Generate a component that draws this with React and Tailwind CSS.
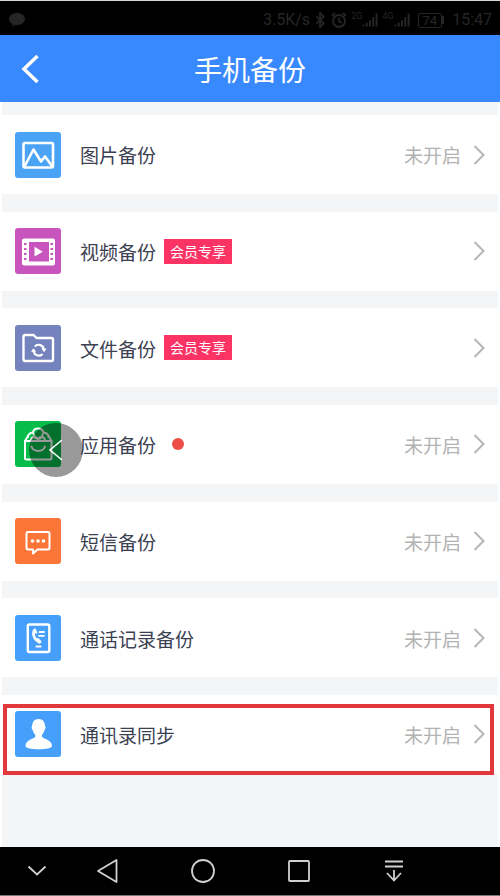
import { clsx } from "clsx";

const glyph = { fill: "none", stroke: "#fff", strokeWidth: 2.4, strokeLinejoin: "round", strokeLinecap: "round" };

function PictureIcon() {
  return (
    <svg viewBox="0 0 46 46" className="size-full" {...glyph} strokeWidth="2.6">
      <rect x="8.5" y="11" width="29.5" height="24.5" rx="1.5" />
      <path d="M10 33.5 18.5 17.5 26 29.5 30 24.5 37 34" />
    </svg>
  );
}

function VideoIcon() {
  return (
    <svg viewBox="0 0 46 46" className="size-full" fill="#fff">
      <path
        fillRule="evenodd"
        d="M9 10.5h29a2 2 0 0 1 2 2v23a2 2 0 0 1-2 2H9a2 2 0 0 1-2-2v-23a2 2 0 0 1 2-2zM14 14v19.5h20V14zM9 15v2h2.5v-2zM9 20v2h2.5v-2zM9 25v2h2.5v-2zM9 30v2h2.5v-2zM35.5 15v2H38v-2zM35.5 20v2H38v-2zM35.5 25v2H38v-2zM35.5 30v2H38v-2z"
      />
      <path d="M19.5 18.8v9.8l8.3-4.9z" />
    </svg>
  );
}

function FolderIcon() {
  return (
    <svg viewBox="0 0 46 46" className="size-full" {...glyph}>
      <path d="M8.5 34.5v-23A1.5 1.5 0 0 1 10 10h8.5l3 3h15a1.5 1.5 0 0 1 1.5 1.5v20a1.5 1.5 0 0 1-1.5 1.5H10a1.5 1.5 0 0 1-1.5-1.5z" />
      <path d="M20.5 20.8a5.3 5.3 0 0 1 8.3 3.2M27 29.6a5.3 5.3 0 0 1-8.3-3.2" strokeWidth="2.2" />
      <path d="M26.3 23.6h5.2l-2.4 3.6zM21.2 26.8H16l2.4-3.6z" fill="#fff" stroke="none" />
    </svg>
  );
}

function AppsIcon() {
  return (
    <svg viewBox="0 0 46 46" className="size-full" {...glyph} strokeWidth="2">
      <path d="M10 20h26.5v17a1.5 1.5 0 0 1-1.5 1.5H11.500A1.5 1.5 0 0 1 10 37z" />
      <path d="M10 20l3-5M36.5 20l-3-5" />
      <path d="M13 16a4 4 0 0 1 5-4c0-6 9.500-6 10.500 0a4 4 0 0 1 5 4" />
      <path d="M16 19.500a3.500 3.500 0 0 1 7 0a3.500 3.500 0 0 1 7 0M19 13.500a4 4 0 0 0 8.500 0" />
      <path d="M16.500 25.500a7 6 0 0 0 13.500 0" />
    </svg>
  );
}

function MessageIcon() {
  return (
    <svg viewBox="0 0 46 46" className="size-full" {...glyph} strokeWidth="2">
      <path d="M13 14h20a1.5 1.5 0 0 1 1.5 1.5V30a1.5 1.5 0 0 1-1.5 1.5H22.5L18 35.5v-4h-5a1.5 1.5 0 0 1-1.5-1.5V15.5A1.5 1.5 0 0 1 13 14z" />
      <g fill="#fff" stroke="none">
        <circle cx="17.500" cy="23" r="1.8" />
        <circle cx="23" cy="23" r="1.8" />
        <circle cx="28.500" cy="23" r="1.8" />
      </g>
    </svg>
  );
}

function CallIcon() {
  return (
    <svg viewBox="0 0 46 46" className="size-full" {...glyph} strokeWidth="2.4">
      <rect x="12.800" y="9.500" width="21.500" height="27.500" rx="1.5" />
      <path d="M19.5 15c-2.5 4-.5 9.500 5 12.300" strokeWidth="2.6" />
      <path d="M20 14.500l1.300 3.300M22.800 24l2.700 2.800" strokeWidth="2" />
      <path d="M24.500 17h4.500M24 20.800h5" strokeWidth="1.8" />
      <path d="M21.500 31.500h4" strokeWidth="2.2" />
    </svg>
  );
}

function ContactIcon() {
  return (
    <svg viewBox="0 0 46 46" className="size-full" fill="#fff">
      <path d="M23.500 8c4.200 0 6.500 2.800 6.500 7 1 .3.800 3.300-.5 4-.4 2-1.300 3.600-2.500 4.700v2c0 1.600 10 2.800 10 9.300 0 2-6 3.300-13.300 3.300S10.500 37 10.500 35c0-6.500 9.800-7.700 9.800-9.300v-2c-1.200-1.100-2.200-2.700-2.600-4.700-1.300-.7-1.500-3.700-.5-4 0-4.200 2.300-7 6.300-7z" />
    </svg>
  );
}

const items = [
  { label: "图片备份", icon: PictureIcon, color: "bg-[#4ba3f5]", status: "未开启" },
  { label: "视频备份", icon: VideoIcon, color: "bg-[#c855bd]", vip: true },
  { label: "文件备份", icon: FolderIcon, color: "bg-[#7482bd]", vip: true },
  { label: "应用备份", icon: AppsIcon, color: "bg-[#06bd4b]", status: "未开启", dot: true, floatingBall: true },
  { label: "短信备份", icon: MessageIcon, color: "bg-[#fa7638]", status: "未开启" },
  { label: "通话记录备份", icon: CallIcon, color: "bg-[#479ffc]", status: "未开启" },
  { label: "通讯录同步", icon: ContactIcon, color: "bg-[#479ffc]", status: "未开启", marked: true },
];

function Signal({ label }) {
  return (
    <span className="flex items-start">
      <span className="text-[9px] leading-none">{label}</span>
      <svg width="16" height="16" viewBox="0 0 17 16" fill="none" stroke="currentColor" strokeWidth="2">
        <path d="M1.5 13v2M5 11v4M8.500 8v7M12 5v10M15.500 1v14" />
      </svg>
    </span>
  );
}

function StatusBar() {
  return (
    <div className="flex h-[35px] items-center justify-between border-t border-[#d8d8d8] bg-black px-2 pt-1 text-[#262626]">
      <svg width="18" height="16" viewBox="0 0 18 16" fill="currentColor">
        <path d="M9 1c4.500 0 8 2.600 8 6s-3.500 6-8 6c-.8 0-1.500 0-2.200-.2L4.500 15v-3C2.300 11 1 9.200 1 7c0-3.400 3.500-6 8-6z" />
      </svg>
      <div className="flex items-center gap-1 font-[Roboto,sans-serif] text-[16px]">
        <span>3.5K/s</span>
        <svg width="13" height="16" viewBox="0 0 13 18" fill="none" stroke="currentColor" strokeWidth="2">
          <path d="M2 5l8 8-4 4V1l4 4-8 8" />
        </svg>
        <svg width="16" height="17" viewBox="0 0 16 17" fill="none" stroke="currentColor" strokeWidth="1.8">
          <circle cx="8" cy="9" r="6" />
          <path d="M8 5.500V9l2.500 2M1 4l3-3M15 4l-3-3" />
        </svg>
        <Signal label="2G" />
        <Signal label="4G" />
        <span className="ml-1 flex items-center">
          <span className="rounded-xs border border-current px-1 text-[13px] leading-[13px]">74</span>
          <span className="h-2 w-0.5 bg-current" />
        </span>
        <span className="ml-1">15:47</span>
      </div>
    </div>
  );
}

function Row({ item }) {
  const Icon = item.icon;
  return (
    <li className="relative">
      <button className="flex h-[79px] w-full items-center bg-white px-[15px] text-left">
        <span className={clsx("size-[46px] shrink-0 rounded-[3px]", item.color)}>
          <Icon />
        </span>
        <span className="relative z-10 ml-[19px] pt-0.5 text-[19px] text-[#3c4152]">{item.label}</span>
        {item.vip && (
          <span className="ml-2 bg-[#fb3465] px-[6px] text-[14px] leading-[25px] text-white">会员专享</span>
        )}
        {item.dot && <span className="ml-4 size-3 rounded-full bg-[#ee4d48]" />}
        <span className="ml-auto pt-0.5 text-[19px] text-[#b2b2b2]">{item.status}</span>
        <svg width="12" height="20" viewBox="0 0 12 20" className="ml-3" fill="none" stroke="#b5b5b5" strokeWidth="2">
          <path d="M1.5 1 10.5 10 1.5 19" />
        </svg>
      </button>
      {item.floatingBall && (
        <span className="absolute top-[18px] left-[29px] size-[54px] rounded-full bg-black/40">
          <svg viewBox="0 0 54 54" fill="none" stroke="#fff" strokeWidth="1.6">
            <path d="M33 17 21 27 33 37" />
          </svg>
        </span>
      )}
      {item.marked && (
        <span className="pointer-events-none absolute top-[9px] right-[6px] -bottom-px left-[3px] border-4 border-[#e2373b]" />
      )}
    </li>
  );
}

function NavBar() {
  return (
    <nav className="grid h-[49px] grid-cols-[59fr_96fr_96fr_95fr_95fr_59fr] items-center border-b border-[#777] bg-black text-[#d0d0d0]">
      <button aria-label="收起" className="flex justify-end pr-3">
        <svg width="20" height="12" viewBox="0 0 20 12" fill="none" stroke="currentColor" strokeWidth="1.8">
          <path d="M1.5 1.5 10 9.500 18.500 1.5" />
        </svg>
      </button>
      <button aria-label="返回" className="flex justify-center">
        <svg width="22" height="26" viewBox="0 0 22 26" fill="none" stroke="currentColor" strokeWidth="1.8" strokeLinejoin="round">
          <path d="M20.500 2v22L2 13z" />
        </svg>
      </button>
      <button aria-label="主页" className="flex justify-center">
        <svg width="26" height="26" viewBox="0 0 26 26" fill="none" stroke="currentColor" strokeWidth="1.8">
          <circle cx="13" cy="13" r="11" />
        </svg>
      </button>
      <button aria-label="最近任务" className="flex justify-center">
        <svg width="24" height="24" viewBox="0 0 24 24" fill="none" stroke="currentColor" strokeWidth="1.8">
          <rect x="2" y="2" width="20" height="20" rx="1" />
        </svg>
      </button>
      <button aria-label="通知栏" className="flex justify-center">
        <svg width="20" height="24" viewBox="0 0 20 24" fill="none" stroke="currentColor" strokeWidth="1.8">
          <path d="M1 2.500h18M1 7.500h18M10 11v10M3 14l7 7.500 7-7.500" />
        </svg>
      </button>
    </nav>
  );
}

export default function App() {
  return (
    <div className="flex min-h-screen flex-col bg-white font-['Noto_Sans_CJK_SC',sans-serif]">
      <StatusBar />
      <header className="grid h-[67px] grid-cols-[60px_1fr_60px] items-center bg-[#3888fe] text-white">
        <button aria-label="返回" className="flex justify-center">
          <svg width="20" height="30" viewBox="0 0 20 30" fill="none" stroke="currentColor" strokeWidth="3.5">
            <path d="M17.500 2 4 15 17.500 28" />
          </svg>
        </button>
        <h1 className="text-center text-[28px] leading-none">手机备份</h1>
      </header>
      <main className="flex flex-1 flex-col border-x-2 border-white bg-[#f3f5f7] pt-[13px] pb-[73px]">
        <ul className="-mx-0.5 flex flex-1 flex-col justify-between">
          {items.map((item) => (
            <Row key={item.label} item={item} />
          ))}
        </ul>
      </main>
      <NavBar />
    </div>
  );
}
